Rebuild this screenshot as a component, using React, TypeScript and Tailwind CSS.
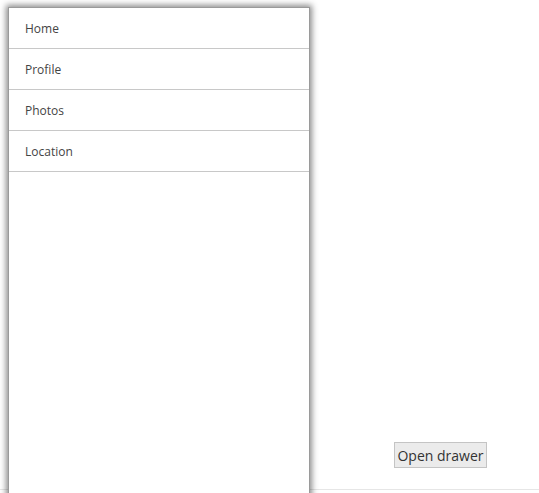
import { useState } from 'react';

const items = ['Home', 'Profile', 'Photos', 'Location'];

export default function App() {
  const [open, setOpen] = useState(true);

  return (
    <div className="relative h-[493px] w-full overflow-hidden bg-white font-['Open_Sans',sans-serif] text-[#333]">
      <div className="flex h-[490px] items-end border-b border-[#e6e6e6] pb-[21px] pl-[394px]">
        <button
          type="button"
          onClick={() => setOpen(!open)}
          className="h-[26px] w-[93px] border border-[#c4c4c4] bg-[#ebebeb] pt-[1px] text-[14px] leading-none text-[#333]"
        >
          Open drawer
        </button>
      </div>

      {open && (
        <nav className="absolute left-[8px] top-[7px] -bottom-[10px] w-[302px] border border-[#9a9a9a] bg-white shadow-[0_0_6px_2px_rgba(0,0,0,0.45)]">
          <ul>
            {items.map((item) => (
              <li
                key={item}
                className="flex h-[41px] items-center border-b border-[#c8c8c8] pl-[16px] pt-[1px] text-[12px] text-[#444]"
              >
                {item}
              </li>
            ))}
          </ul>
        </nav>
      )}
    </div>
  );
}
